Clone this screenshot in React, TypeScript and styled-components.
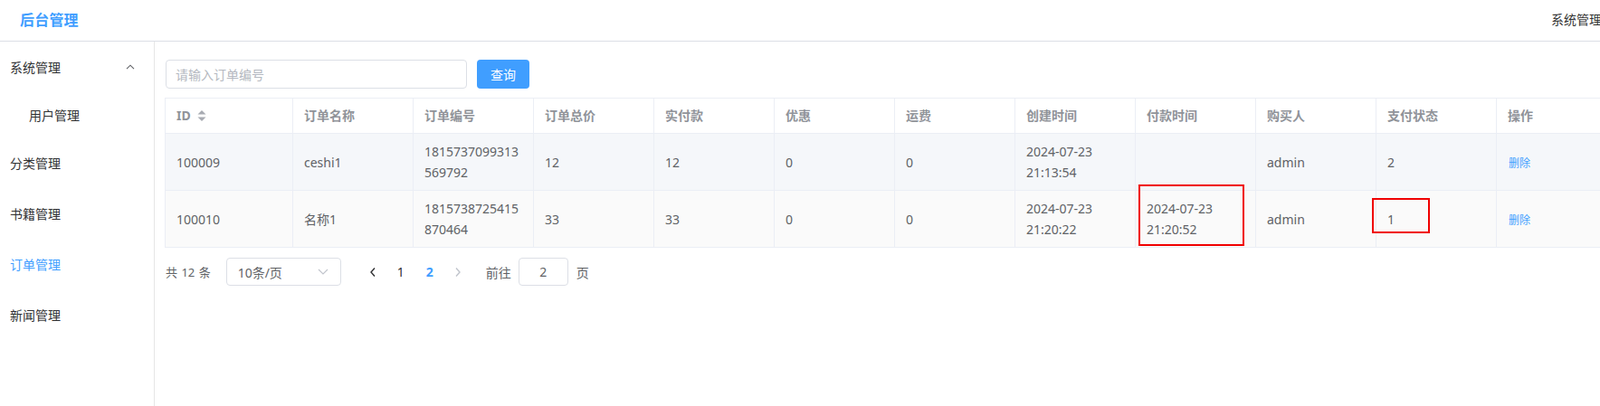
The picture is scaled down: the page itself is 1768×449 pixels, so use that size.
import React from "react";
import styled, { createGlobalStyle } from "styled-components";

const GlobalStyle = createGlobalStyle`
  html, body { margin: 0; padding: 0; background: #fff; overflow: hidden; }
  body {
    font-family: "Noto Sans", "Noto Sans CJK SC", sans-serif;
    color: #606266;
    -webkit-font-smoothing: antialiased;
  }
  * { box-sizing: border-box; }
`;

const Page = styled.div`
  width: 1790px;
  height: 449px;
  display: flex;
  flex-direction: column;
`;

const Header = styled.header`
  height: 46px;
  flex: none;
  border-bottom: 1px solid #dcdfe6;
  display: flex;
  align-items: center;
  justify-content: space-between;
  padding: 0 20px 4px 22px;
`;

const Brand = styled.div`
  font-size: 16px;
  font-weight: 700;
  color: #409eff;
  letter-spacing: 0.2px;
`;

const HeaderRight = styled.div`
  font-size: 14px;
  color: #333;
`;

const Body = styled.div`
  flex: 1;
  display: flex;
  min-height: 0;
`;

const Aside = styled.aside`
  width: 171px;
  flex: none;
  border-right: 1px solid #e6e6e6;
`;

const MenuTitle = styled.div<{ $active?: boolean; $sub?: boolean }>`
  height: ${(p) => (p.$sub ? 50 : 56)}px;
  display: flex;
  align-items: center;
  justify-content: space-between;
  padding: 0 21px 0 ${(p) => (p.$sub ? 32 : 11)}px;
  font-size: 14px;
  color: ${(p) => (p.$active ? "#409eff" : "#303133")};
  font-family: "Noto Sans CJK SC", sans-serif;
`;

const Main = styled.main`
  flex: 1;
  padding: 20px 0 0 11px;
`;

const SearchRow = styled.div`
  display: flex;
  gap: 11px;
  padding-left: 1px;
`;

const SearchInput = styled.input`
  width: 333px;
  height: 32px;
  border: 1px solid #dcdfe6;
  border-radius: 4px;
  padding: 0 10px;
  font-size: 14px;
  font-family: "Noto Sans CJK SC", sans-serif;
  color: #606266;
  outline: none;
  &::placeholder { color: #b4b8c0; }
`;

const PrimaryButton = styled.button`
  height: 32px;
  width: 58px;
  border: none;
  border-radius: 4px;
  background: #409eff;
  color: #fff;
  font-size: 14px;
  font-family: "Noto Sans CJK SC", sans-serif;
  cursor: pointer;
`;

const TableWrap = styled.div`
  margin-top: 10px;
  width: 1605px;
`;

const Table = styled.table`
  width: 1605px;
  table-layout: fixed;
  border-collapse: separate;
  border-spacing: 0;
  border-top: 1px solid #ebeef5;
  border-left: 1px solid #ebeef5;
`;

const Th = styled.th<{ $w: number }>`
  width: ${(p) => p.$w}px;
  box-sizing: border-box;
  text-align: left;
  padding: 8px 12px;
  line-height: 22px;
  font-size: 14px;
  font-weight: 700;
  color: #909399;
  border-right: 1px solid #ebeef5;
  border-bottom: 1px solid #ebeef5;
  background: #fff;
  font-family: "Noto Sans", "Noto Sans CJK SC", sans-serif;
`;

const HeadInner = styled.span`
  display: inline-flex;
  align-items: center;
  gap: 7px;
`;

const Tr = styled.tr<{ $bg: string }>`
  background: ${(p) => p.$bg};
`;

const Td = styled.td`
  position: relative;
  padding: 8px 12px;
  line-height: 23px;
  font-size: 14px;
  color: #606266;
  border-right: 1px solid #ebeef5;
  border-bottom: 1px solid #ebeef5;
  word-break: break-all;
  vertical-align: middle;
`;

const DateText = styled.span`
  word-break: normal;
`;

const LinkText = styled.span`
  font-size: 12px;
  color: #409eff;
  font-family: "Noto Sans CJK SC", sans-serif;
  padding-left: 1px;
`;

const Mark = styled.div<{ $l: number; $t: number; $w: number; $h: number }>`
  position: absolute;
  left: ${(p) => p.$l}px;
  top: ${(p) => p.$t}px;
  width: ${(p) => p.$w}px;
  height: ${(p) => p.$h}px;
  border: 2px solid #f00000;
  pointer-events: none;
`;

const Pagination = styled.div`
  display: flex;
  align-items: center;
  margin-top: 11px;
  height: 31px;
  font-size: 13px;
  color: #606266;
  font-family: "Noto Sans", "Noto Sans CJK SC", sans-serif;
`;

const Total = styled.span`
  margin-left: 1px;
  margin-right: 17px;
  word-spacing: 1px;
`;

const SizeSelect = styled.div`
  width: 127px;
  height: 31px;
  border: 1px solid #dcdfe6;
  border-radius: 4px;
  display: flex;
  align-items: center;
  justify-content: space-between;
  padding: 0 13px 0 12px;
  font-size: 14px;
  color: #606266;
`;

const PagerBtn = styled.span<{ $w: number; $active?: boolean; $disabled?: boolean }>`
  width: ${(p) => p.$w}px;
  display: inline-flex;
  justify-content: center;
  align-items: center;
  font-size: 14px;
  font-weight: ${(p) => (p.$active ? 700 : 400)};
  color: ${(p) => (p.$active ? "#409eff" : p.$disabled ? "#c0c4cc" : "#303133")};
`;

const Pager = styled.div`
  display: flex;
  align-items: center;
  margin-left: 20px;
`;

const JumpLabel = styled.span`
  margin-left: 16px;
  font-family: "Noto Sans CJK SC", sans-serif;
  font-size: 14px;
`;

const JumpInput = styled.div`
  width: 55px;
  height: 31px;
  margin: 0 9px 0 8px;
  border: 1px solid #dcdfe6;
  border-radius: 4px;
  display: flex;
  align-items: center;
  justify-content: center;
  font-size: 14px;
  color: #606266;
`;

const ChevronUp = () => (
  <svg width="10" height="6" viewBox="0 0 10 6" fill="none">
    <polyline points="1,5.2 5,1.2 9,5.2" stroke="#606266" strokeWidth="1.1" />
  </svg>
);

const ChevronDown = () => (
  <svg width="12" height="7" viewBox="0 0 12 7" fill="none">
    <polyline points="1,1 6,6 11,1" stroke="#c0c4cc" strokeWidth="1.1" />
  </svg>
);

const SortCaret = () => (
  <svg width="10" height="14" viewBox="0 0 10 14">
    <polygon points="5,1 9.5,5.5 0.5,5.5" fill="#a8abb2" />
    <polygon points="0.5,8.5 9.5,8.5 5,13" fill="#a8abb2" />
  </svg>
);

const Arrow = ({ dir, color }: { dir: "l" | "r"; color: string }) => (
  <svg width="8" height="12" viewBox="0 0 8 12" fill="none">
    <polyline
      points={dir === "l" ? "6,1.5 2,6 6,10.5" : "2,1.5 6,6 2,10.5"}
      stroke={color}
      strokeWidth="1.4"
    />
  </svg>
);

const headers = [
  "订单名称",
  "订单编号",
  "订单总价",
  "实付款",
  "优惠",
  "运费",
  "创建时间",
  "付款时间",
  "购买人",
  "支付状态",
  "操作",
];

type Row = {
  id: string;
  name: string;
  no: string;
  total: string;
  paid: string;
  discount: string;
  freight: string;
  created: [string, string];
  payTime?: [string, string];
  buyer: string;
  status: string;
};

const rows: Row[] = [
  {
    id: "100009",
    name: "ceshi1",
    no: "1815737099313569792",
    total: "12",
    paid: "12",
    discount: "0",
    freight: "0",
    created: ["2024-07-23", "21:13:54"],
    buyer: "admin",
    status: "2",
  },
  {
    id: "100010",
    name: "名称1",
    no: "1815738725415870464",
    total: "33",
    paid: "33",
    discount: "0",
    freight: "0",
    created: ["2024-07-23", "21:20:22"],
    payTime: ["2024-07-23", "21:20:52"],
    buyer: "admin",
    status: "1",
  },
];

const DateCell = ({ v }: { v?: [string, string] }) =>
  v ? (
    <DateText>
      {v[0]} {v[1]}
    </DateText>
  ) : null;

export default function App() {
  return (
    <>
      <GlobalStyle />
      <Page>
        <Header>
          <Brand>后台管理</Brand>
          <HeaderRight>系统管理</HeaderRight>
        </Header>
        <Body>
          <Aside>
            <MenuTitle>
              <span>系统管理</span>
              <ChevronUp />
            </MenuTitle>
            <MenuTitle $sub>用户管理</MenuTitle>
            <MenuTitle>分类管理</MenuTitle>
            <MenuTitle>书籍管理</MenuTitle>
            <MenuTitle $active>订单管理</MenuTitle>
            <MenuTitle>新闻管理</MenuTitle>
          </Aside>
          <Main>
            <SearchRow>
              <SearchInput placeholder="请输入订单编号" />
              <PrimaryButton>查询</PrimaryButton>
            </SearchRow>
            <TableWrap>
              <Table>
                <thead>
                  <tr>
                    <Th $w={141}>
                      <HeadInner>
                        ID
                        <SortCaret />
                      </HeadInner>
                    </Th>
                    {headers.map((h) => (
                      <Th key={h} $w={133}>
                        {h}
                      </Th>
                    ))}
                  </tr>
                </thead>
                <tbody>
                  {rows.map((r, i) => (
                    <Tr key={r.id} $bg={i === 0 ? "#f5f7fa" : "#fafafa"}>
                      <Td>{r.id}</Td>
                      <Td>{r.name}</Td>
                      <Td>{r.no}</Td>
                      <Td>{r.total}</Td>
                      <Td>{r.paid}</Td>
                      <Td>{r.discount}</Td>
                      <Td>{r.freight}</Td>
                      <Td>
                        <DateCell v={r.created} />
                      </Td>
                      <Td>
                        <DateCell v={r.payTime} />
                        {i === 1 && <Mark $l={3} $t={-7} $w={117} $h={68} />}
                      </Td>
                      <Td>{r.buyer}</Td>
                      <Td>
                        {r.status}
                        {i === 1 && <Mark $l={-5} $t={8} $w={64} $h={39} />}
                      </Td>
                      <Td>
                        <LinkText>删除</LinkText>
                      </Td>
                    </Tr>
                  ))}
                </tbody>
              </Table>
            </TableWrap>
            <Pagination>
              <Total>共 12 条</Total>
              <SizeSelect>
                <span>10条/页</span>
                <ChevronDown />
              </SizeSelect>
              <Pager>
                <PagerBtn $w={30}>
                  <Arrow dir="l" color="#303133" />
                </PagerBtn>
                <PagerBtn $w={32}>1</PagerBtn>
                <PagerBtn $w={32} $active>
                  2
                </PagerBtn>
                <PagerBtn $w={30} $disabled>
                  <Arrow dir="r" color="#c0c4cc" />
                </PagerBtn>
              </Pager>
              <JumpLabel>前往</JumpLabel>
              <JumpInput>2</JumpInput>
              <JumpLabel as="span" style={{ marginLeft: 0 }}>
                页
              </JumpLabel>
            </Pagination>
          </Main>
        </Body>
      </Page>
    </>
  );
}
